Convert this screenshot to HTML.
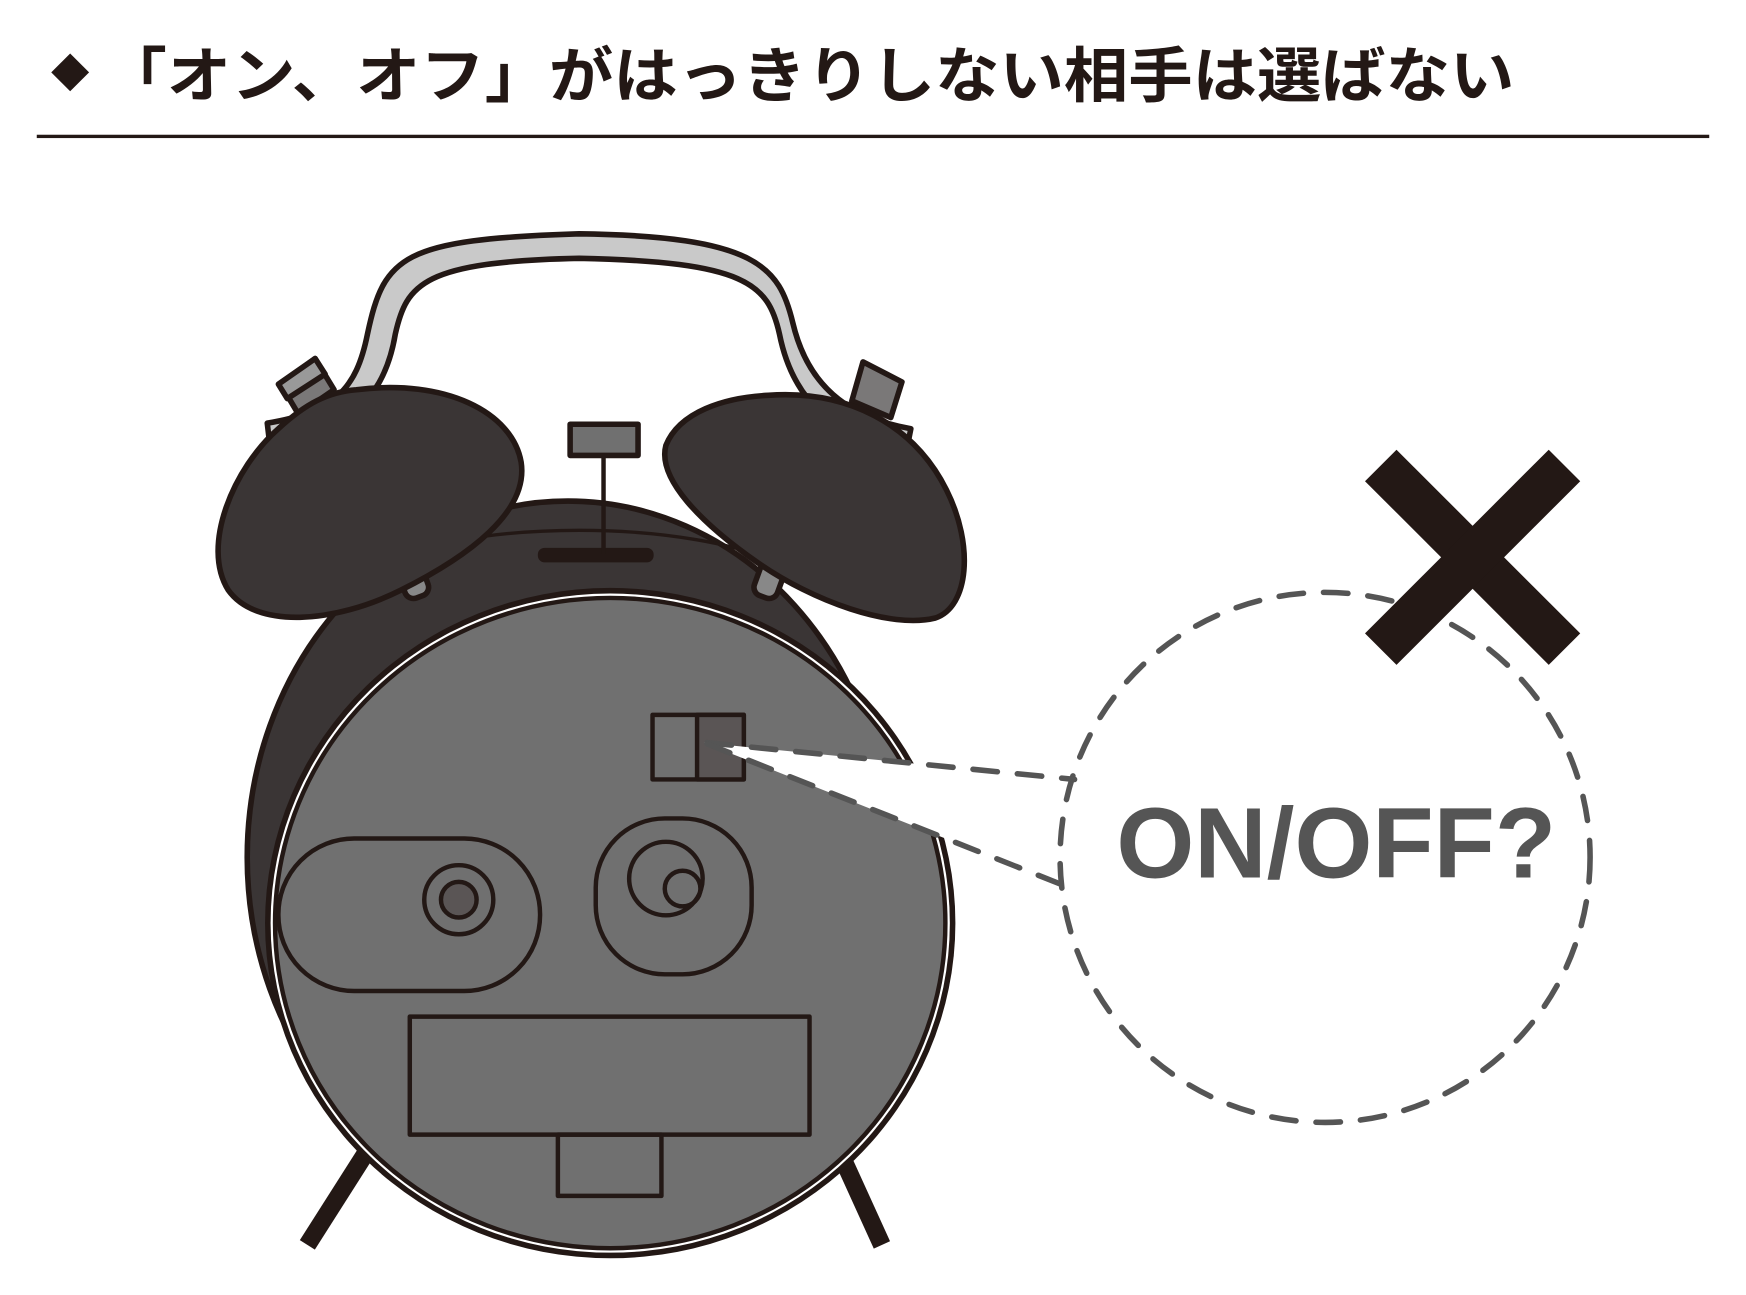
<!DOCTYPE html>
<html><head><meta charset="utf-8"><style>
html,body{margin:0;padding:0;background:#fff;}
svg{display:block}
</style></head><body>
<svg width="1746" height="1295" viewBox="0 0 1568 1163" xmlns="http://www.w3.org/2000/svg">
<polygon points="63,48 80,65 63,82 46,65" fill="#231815"/>
<text x="92" y="87" font-family="'Liberation Sans','Noto Sans CJK JP',sans-serif" font-weight="bold" font-size="54" fill="#231815" textLength="1268" lengthAdjust="spacingAndGlyphs">「オン、オフ」がはっきりしない相手は選ばない</text>
<rect x="33" y="121" width="1502" height="3" fill="#231815"/>
<g stroke="#231815" stroke-linejoin="round" stroke-width="5">
<line x1="332" y1="1030" x2="276" y2="1118" stroke-width="16"/>
<line x1="752" y1="1030" x2="792" y2="1118" stroke-width="16"/>
<path d="M252 345 L283 322 L300 350 L268 372 Z" fill="#7a7878"/>
<path d="M250 345 L283 322 L292 336 L258 358 Z" fill="#999"/>
<path d="M775 325 L810 343 L800 375 L765 360 Z" fill="#7a7878"/>
<path d="M240 380 C300 370 320 350 330 300 C345 230 360 215 520 210 C680 212 700 240 712 290 C725 345 760 375 818 385 L815 400 C750 395 712 360 700 300 C690 255 670 235 520 232 C380 235 365 255 355 300 C345 360 310 390 242 397 Z" fill="#c9c9c9"/>
<ellipse cx="510" cy="770" rx="288" ry="320" fill="#3a3535"/>
<path d="M330 510 C420 465 620 465 710 510" fill="none" stroke-width="3"/>
<rect x="483" y="492" width="104" height="13" rx="6" fill="#231815" stroke="none"/>
<line x1="542" y1="408" x2="542" y2="498" stroke-width="4"/>
<rect x="512" y="381" width="61" height="28" fill="#707070"/>
<rect x="360" y="505" width="22" height="32" rx="8" fill="#888" transform="rotate(-20 371 520)"/>
<rect x="680" y="505" width="22" height="32" rx="8" fill="#888" transform="rotate(20 691 520)"/>
<path d="M320 350 C400 340 460 370 468 415 C475 460 420 500 360 530 C300 560 230 565 205 530 C180 490 210 420 250 385 C275 362 295 352 320 350 Z" fill="#3a3535"/>
<path d="M690 355 C760 350 820 380 850 440 C875 490 870 545 840 555 C800 565 730 540 680 505 C630 470 590 430 598 400 C610 370 650 357 690 355 Z" fill="#3a3535"/>
<ellipse cx="548" cy="829" rx="310" ry="301" fill="#231815" stroke="none"/>
<ellipse cx="548" cy="829" rx="305" ry="296" fill="#fff" stroke="none"/>
<ellipse cx="548" cy="829" rx="301" ry="292" fill="#707070" stroke-width="4"/>
<rect x="250" y="753" width="235" height="137" rx="68" fill="none" stroke-width="4"/>
<circle cx="412" cy="808" r="31" fill="none" stroke-width="4"/>
<circle cx="412" cy="808" r="16" fill="#5a5555" stroke-width="4"/>
<rect x="535" y="735" width="140" height="140" rx="62" fill="none" stroke-width="4"/>
<circle cx="598" cy="789" r="33" fill="none" stroke-width="4"/>
<circle cx="613" cy="798" r="16" fill="none" stroke-width="4"/>
<rect x="368" y="913" width="359" height="106" fill="none" stroke-width="4"/>
<rect x="501" y="1019" width="93" height="55" fill="none" stroke-width="4"/>
<rect x="586" y="642" width="82" height="58" fill="#707070" stroke-width="4"/>
<rect x="626" y="642" width="42" height="58" fill="#5a5555" stroke-width="4"/>
</g>
<polygon points="632,667 965,700 955,795" fill="#fff"/>
<circle cx="1190" cy="770" r="238" fill="#fff"/>
<g fill="none" stroke="#555" stroke-width="5" stroke-dasharray="22 18" stroke-linecap="round">
<circle cx="1190" cy="770" r="238"/>
<line x1="635" y1="667" x2="965" y2="700"/>
<line x1="635" y1="668" x2="955" y2="795"/>
</g>
<text x="1200" y="788" text-anchor="middle" font-family="'Liberation Sans',sans-serif" font-weight="bold" font-size="90" fill="#555">ON/OFF?</text>
<g stroke="#231815" stroke-width="40">
<line x1="1240" y1="418" x2="1405" y2="583"/>
<line x1="1405" y1="418" x2="1240" y2="583"/>
</g>
</svg>
</body></html>
